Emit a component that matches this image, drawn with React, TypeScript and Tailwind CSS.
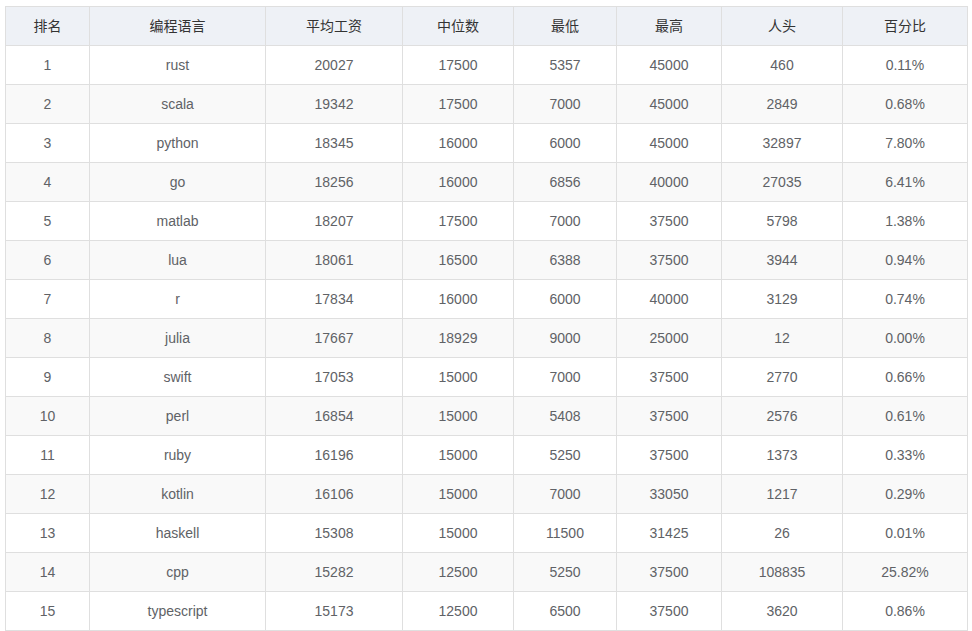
const columns = ["排名", "编程语言", "平均工资", "中位数", "最低", "最高", "人头", "百分比"];
const widths = ["w-[84px]", "w-[176px]", "w-[137px]", "w-[111px]", "w-[103px]", "w-[105px]", "w-[121px]", "w-[125px]"];

const rows: (string | number)[][] = [
  [1, "rust", 20027, 17500, 5357, 45000, 460, "0.11%"],
  [2, "scala", 19342, 17500, 7000, 45000, 2849, "0.68%"],
  [3, "python", 18345, 16000, 6000, 45000, 32897, "7.80%"],
  [4, "go", 18256, 16000, 6856, 40000, 27035, "6.41%"],
  [5, "matlab", 18207, 17500, 7000, 37500, 5798, "1.38%"],
  [6, "lua", 18061, 16500, 6388, 37500, 3944, "0.94%"],
  [7, "r", 17834, 16000, 6000, 40000, 3129, "0.74%"],
  [8, "julia", 17667, 18929, 9000, 25000, 12, "0.00%"],
  [9, "swift", 17053, 15000, 7000, 37500, 2770, "0.66%"],
  [10, "perl", 16854, 15000, 5408, 37500, 2576, "0.61%"],
  [11, "ruby", 16196, 15000, 5250, 37500, 1373, "0.33%"],
  [12, "kotlin", 16106, 15000, 7000, 33050, 1217, "0.29%"],
  [13, "haskell", 15308, 15000, 11500, 31425, 26, "0.01%"],
  [14, "cpp", 15282, 12500, 5250, 37500, 108835, "25.82%"],
  [15, "typescript", 15173, 12500, 6500, 37500, 3620, "0.86%"],
];

export default function App() {
  return (
    <div className="bg-white pl-[5px] pt-[6px] font-['Liberation_Sans','Noto_Sans_CJK_SC',sans-serif] text-[14px]">
      <table className="table-fixed border-collapse border border-[#dfdfdf] w-[962px]">
        <colgroup>
          {widths.map((w, i) => (
            <col key={i} className={w} />
          ))}
        </colgroup>
        <thead>
          <tr className="bg-[#eef1f6]">
            {columns.map((c) => (
              <th key={c} className="h-[39px] border border-[#dfdfdf] p-0 text-center font-normal text-[#333333]">
                {c}
              </th>
            ))}
          </tr>
        </thead>
        <tbody>
          {rows.map((r, i) => (
            <tr key={i} className={i % 2 === 1 ? "bg-[#f9f9f9]" : "bg-white"}>
              {r.map((v, j) => (
                <td key={j} className="h-[39px] border border-[#dfdfdf] p-0 text-center text-[#606266]">
                  {v}
                </td>
              ))}
            </tr>
          ))}
        </tbody>
      </table>
    </div>
  );
}
